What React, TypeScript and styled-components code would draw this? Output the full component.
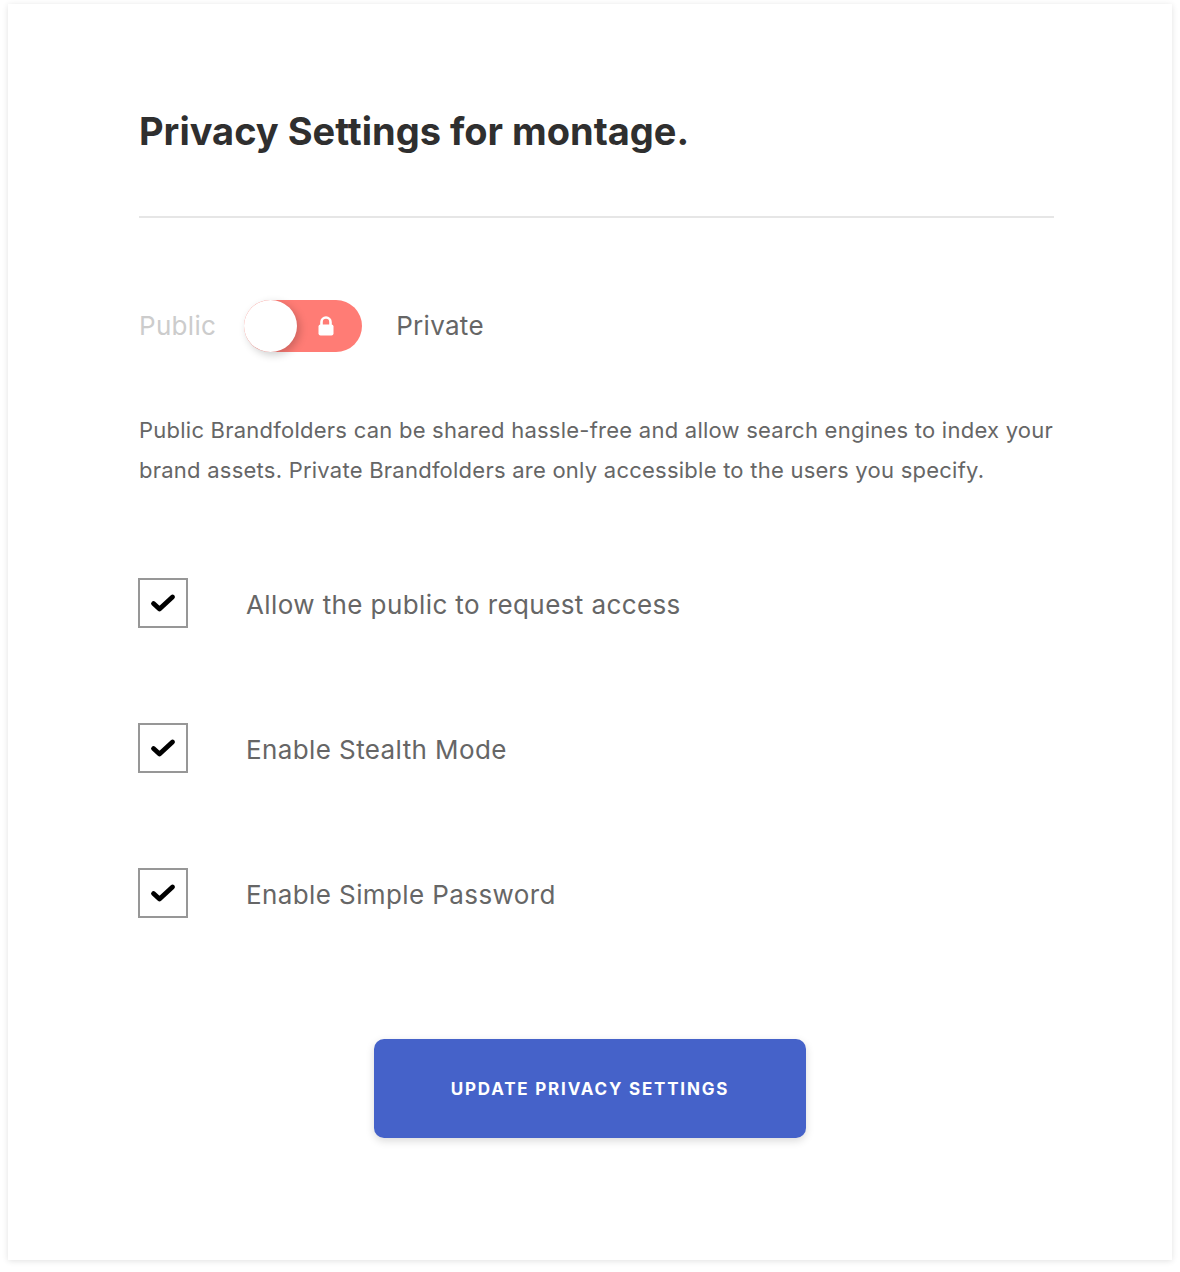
import React from "react";
import styled, { createGlobalStyle } from "styled-components";

const Global = createGlobalStyle`
  html, body { margin: 0; padding: 0; background: #ffffff; }
  body { font-family: "Inter", "Lato", sans-serif; -webkit-font-smoothing: antialiased; }
`;

const Page = styled.div`
  padding: 4px 8px 12px 8px;
`;

const Card = styled.div`
  background: #fff;
  height: 1256px;
  box-sizing: border-box;
  padding: 104px 118px 0 131px;
  box-shadow: 0 1px 6px rgba(0, 0, 0, 0.12);
  display: flex;
  flex-direction: column;
`;

const Title = styled.h1`
  margin: 0;
  font-size: 38px;
  line-height: 46px;
  font-weight: 700;
  color: #2f2f2f;
`;

const Divider = styled.hr`
  margin: 62px 0 0 0;
  border: none;
  height: 2px;
  background: #e6e6e6;
`;

const ToggleRow = styled.div`
  margin-top: 82px;
  display: flex;
  align-items: center;
  height: 52px;
`;

const ToggleLabel = styled.span<{ $active?: boolean }>`
  font-size: 26px;
  letter-spacing: 0.3px;
  margin-top: -2px;
  color: ${(p) => (p.$active ? "#666666" : "#cccccc")};
`;

const Switch = styled.div`
  position: relative;
  width: 118px;
  height: 52px;
  border-radius: 26px;
  background: #ff7c75;
  margin: 0 34px 0 28px;
  display: flex;
  align-items: center;
  justify-content: flex-end;
  padding-right: 27px;
  box-sizing: border-box;
`;

const Knob = styled.div`
  position: absolute;
  left: 0;
  top: 0;
  width: 53px;
  height: 52px;
  border-radius: 50%;
  background: #fff;
  box-shadow: 3px 3px 8px rgba(0, 0, 0, 0.2);
`;

const Description = styled.p`
  margin: 58px 0 0 0;
  font-size: 22px;
  line-height: 40px;
  letter-spacing: 0.24px;
  color: #666666;
`;

const Options = styled.div`
  margin-top: 88px;
  display: flex;
  flex-direction: column;
  gap: 95px;
`;

const OptionRow = styled.label`
  display: flex;
  align-items: center;
  gap: 58px;
`;

const Box = styled.span`
  width: 50px;
  height: 50px;
  box-sizing: border-box;
  border: 2px solid #979797;
  display: flex;
  align-items: center;
  justify-content: center;
  margin-left: -1px;
`;

const OptionText = styled.span`
  font-size: 26px;
  letter-spacing: 0.4px;
  margin-top: 2px;
  color: #666666;
`;

const ButtonWrap = styled.div`
  margin-top: 121px;
  display: flex;
  justify-content: center;
  padding-right: 13px;
`;

const Button = styled.button`
  width: 432px;
  height: 99px;
  border: none;
  border-radius: 10px;
  background: #4562c9;
  color: #fff;
  font-family: "Inter", "Lato", sans-serif;
  font-size: 17px;
  font-weight: 700;
  letter-spacing: 1.8px;
  box-shadow: 0 3px 8px rgba(0, 0, 0, 0.15);
  cursor: pointer;
`;

const Lock = () => (
  <svg width="18" height="20" viewBox="0 0 18 20">
    <path d="M4.5 9 V6 a4.5 4.5 0 0 1 9 0 V9" fill="none" stroke="#fff" strokeWidth="2.6" />
    <rect x="1.5" y="8.5" width="15" height="11" rx="2" fill="#fff" />
  </svg>
);

const Check = () => (
  <svg width="26" height="20" viewBox="0 0 26 20">
    <path d="M3.5 10.5 L9.5 16 L22.5 4" fill="none" stroke="#000" strokeWidth="4.8" strokeLinecap="round" strokeLinejoin="round" />
  </svg>
);

const options = [
  "Allow the public to request access",
  "Enable Stealth Mode",
  "Enable Simple Password",
];

export default function App() {
  return (
    <Page>
      <Global />
      <Card>
        <Title>Privacy Settings for montage.</Title>
        <Divider />
        <ToggleRow>
          <ToggleLabel>Public</ToggleLabel>
          <Switch>
            <Knob />
            <Lock />
          </Switch>
          <ToggleLabel $active>Private</ToggleLabel>
        </ToggleRow>
        <Description>
          Public Brandfolders can be shared hassle-free and allow search engines to index your brand assets. Private Brandfolders are only accessible to the users you specify.
        </Description>
        <Options>
          {options.map((o) => (
            <OptionRow key={o}>
              <Box>
                <Check />
              </Box>
              <OptionText>{o}</OptionText>
            </OptionRow>
          ))}
        </Options>
        <ButtonWrap>
          <Button>UPDATE PRIVACY SETTINGS</Button>
        </ButtonWrap>
      </Card>
    </Page>
  );
}
